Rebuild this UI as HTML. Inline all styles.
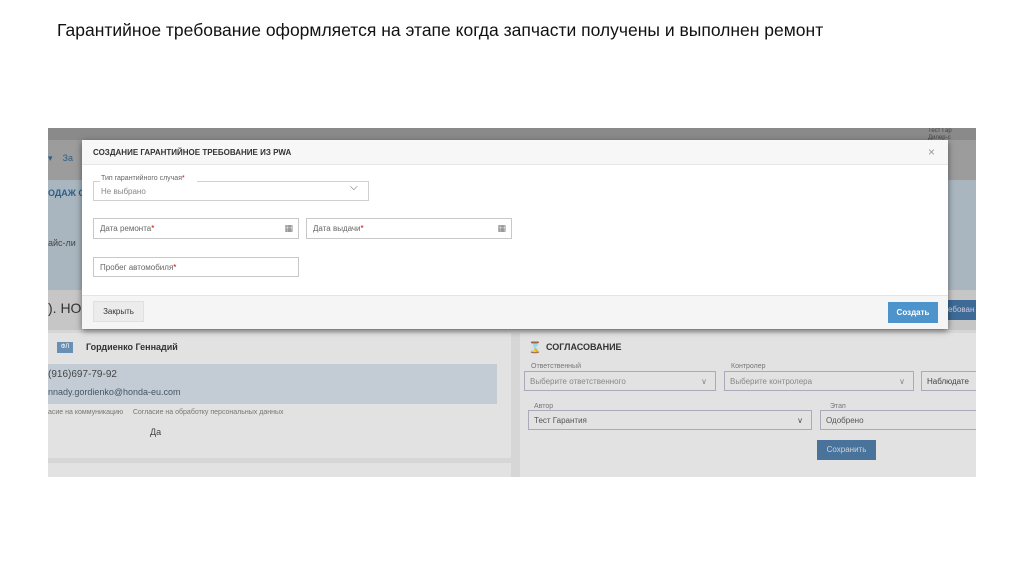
<!DOCTYPE html>
<html><head><meta charset="utf-8"><style>
*{box-sizing:border-box;margin:0;padding:0}
body{width:1024px;height:574px;background:#fff;font-family:"Liberation Sans","DejaVu Sans",sans-serif;position:relative;overflow:hidden}
.abs{position:absolute}
.inp{position:absolute;border:1px solid #c8c8c8;background:#fff;font-size:8px;color:#666;padding-left:6px;display:flex;align-items:center}
.inp .r{color:#c00}
.g{position:absolute;border:1px solid #aab;font-size:8px;color:#888;padding-left:5px;display:flex;align-items:center}
</style></head><body>
<div class="abs" style="left:57px;top:20px;font-size:17.5px;color:#111">Гарантийное требование оформляется на этапе когда запчасти получены и выполнен ремонт</div>

<div class="abs" style="left:48px;top:128px;width:928px;height:349px;background:#d6d6d6;overflow:hidden">
  <div class="abs" style="left:0;top:0;width:928px;height:12px;background:#8a8a8a"></div>
  <div class="abs" style="left:0;top:12px;width:928px;height:40px;background:#9c9c9c"></div>
  <div class="abs" style="left:0;top:52px;width:928px;height:110px;background:#a9b6bf"></div>
  <div class="abs" style="left:0;top:162px;width:928px;height:40px;background:#c6c6c6"></div>
  <div class="abs" style="left:0;top:25px;font-size:9px;color:#2f5f86">▾ &nbsp;&nbsp;&nbsp;За</div>
  <div class="abs" style="left:0;top:60px;font-size:9px;color:#2f5f86;font-weight:bold">ОДАЖ О</div>
  <div class="abs" style="left:0;top:110px;font-size:9px;color:#444">айс-ли</div>
  <div class="abs" style="left:0;top:172px;font-size:14px;color:#333">). HON</div>
  <div class="abs" style="left:880px;top:0;font-size:6px;color:#444;line-height:7px">Тест Гар<br>Дилер-с</div>
  <div class="abs" style="left:898px;top:172px;width:30px;height:20px;background:#3d6a96;color:#ccd;font-size:8px;padding:5px 2px">ебован</div>
  <div class="abs" style="left:0;top:205px;width:463px;height:125px;background:#e2e2e2"></div>
  <div class="abs" style="left:9px;top:214px;width:16px;height:11px;background:#6a8fb4;color:#fff;font-size:6px;text-align:center;line-height:11px">ФЛ</div>
  <div class="abs" style="left:38px;top:214px;font-size:9px;color:#333;font-weight:bold">Гордиенко Геннадий</div>
  <div class="abs" style="left:0;top:236px;width:449px;height:40px;background:#c3ccd4"></div>
  <div class="abs" style="left:0;top:241px;font-size:10px;color:#444">(916)697-79-92</div>
  <div class="abs" style="left:0;top:259px;font-size:9px;color:#456">nnady.gordienko@honda-eu.com</div>
  <div class="abs" style="left:0;top:281px;font-size:7px;color:#777">асие на коммуникацию &nbsp;&nbsp;&nbsp;&nbsp;Согласие на обработку персональных данных</div>
  <div class="abs" style="left:102px;top:299px;font-size:9px;color:#444">Да</div>
  <div class="abs" style="left:0;top:335px;width:463px;height:14px;background:#e2e2e2"></div>
  <div class="abs" style="left:472px;top:205px;width:456px;height:144px;background:#e2e2e2"></div>
  <div class="abs" style="left:480px;top:213px;font-size:11px;color:#345">⌛</div>
  <div class="abs" style="left:498px;top:214px;font-size:9px;color:#333;font-weight:bold">СОГЛАСОВАНИЕ</div>
  <div class="abs" style="left:483px;top:235px;font-size:7px;color:#777">Ответственный</div>
  <div class="g" style="left:476px;top:243px;width:192px;height:20px">Выберите ответственного<span style="margin-left:auto;margin-right:8px">∨</span></div>
  <div class="abs" style="left:683px;top:235px;font-size:7px;color:#777">Контролер</div>
  <div class="g" style="left:676px;top:243px;width:190px;height:20px">Выберите контролера<span style="margin-left:auto;margin-right:8px">∨</span></div>
  <div class="g" style="left:873px;top:243px;width:60px;height:20px;color:#444">Наблюдате</div>
  <div class="abs" style="left:486px;top:275px;font-size:7px;color:#777">Автор</div>
  <div class="g" style="left:480px;top:282px;width:284px;height:20px;color:#555">Тест Гарантия<span style="margin-left:auto;margin-right:8px">∨</span></div>
  <div class="abs" style="left:782px;top:275px;font-size:7px;color:#777">Этап</div>
  <div class="g" style="left:772px;top:282px;width:160px;height:20px;color:#555">Одобрено</div>
  <div class="abs" style="left:769px;top:312px;width:59px;height:20px;background:#4a739c;color:#c8d4e0;font-size:8px;text-align:center;line-height:20px">Сохранить</div>
</div>

<div class="abs" style="left:82px;top:140px;width:866px;height:189px;background:#fff;box-shadow:0 2px 6px rgba(0,0,0,.5)">
  <div class="abs" style="left:0;top:0;width:866px;height:25px;background:#f7f7f7;border-bottom:1px solid #e6e6e6"></div>
  <div class="abs" style="left:11px;top:8px;font-size:8px;font-weight:bold;color:#333">СОЗДАНИЕ ГАРАНТИЙНОЕ ТРЕБОВАНИЕ ИЗ PWA</div>
  <div class="abs" style="left:846px;top:5px;font-size:12px;color:#999">×</div>
  <div class="abs" style="left:11px;top:41px;width:276px;height:20px;border:1px solid #d0d0d0;border-top:none"></div>
  <div class="abs" style="left:11px;top:41px;width:7px;border-top:1px solid #d0d0d0"></div>
  <div class="abs" style="left:115px;top:41px;width:172px;border-top:1px solid #d0d0d0"></div>
  <div class="abs" style="left:19px;top:35px;font-size:7px;color:#666">Тип гарантийного случая<span style="color:#c00">*</span></div>
  <div class="abs" style="left:19px;top:47px;font-size:8px;color:#888">Не выбрано</div>
  <div class="abs" style="left:268px;top:42px;font-size:10px;color:#555">⌵</div>
  <div class="inp" style="left:11px;top:78px;width:206px;height:21px">Дата ремонта<span class="r">*</span><span style="margin-left:auto;margin-right:5px;color:#777;font-size:9px">▦</span></div>
  <div class="inp" style="left:224px;top:78px;width:206px;height:21px">Дата выдачи<span class="r">*</span><span style="margin-left:auto;margin-right:5px;color:#777;font-size:9px">▦</span></div>
  <div class="inp" style="left:11px;top:117px;width:206px;height:20px">Пробег автомобиля<span class="r">*</span></div>
  <div class="abs" style="left:0;top:155px;width:866px;height:34px;background:#f5f5f5;border-top:1px solid #e4e4e4"></div>
  <div class="abs" style="left:11px;top:161px;width:51px;height:21px;background:#ececec;border:1px solid #e0e0e0;font-size:8px;color:#333;text-align:center;line-height:19px">Закрыть</div>
  <div class="abs" style="left:806px;top:162px;width:50px;height:21px;background:#4e94cc;font-size:8px;color:#fff;font-weight:bold;text-align:center;line-height:21px">Создать</div>
</div>
</body></html>
